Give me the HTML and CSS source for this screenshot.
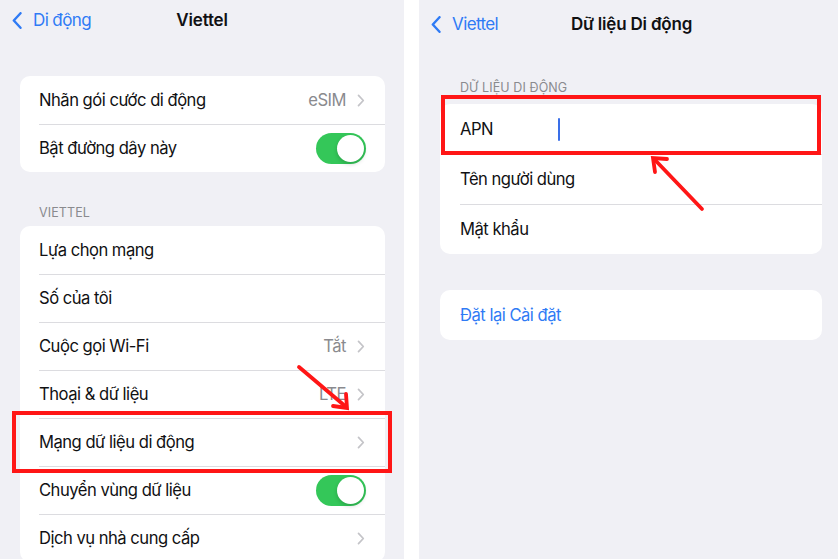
FILE: index.html
```html
<!DOCTYPE html>
<html lang="vi">
<head>
<meta charset="utf-8">
<link rel="stylesheet" href="styles.css">
</head>
<body>
<div class="page">
  <section class="panel panel-left">
    <header class="nav nav-left">
      <a class="back">
        <svg class="back-ico" viewBox="0 0 10 17" width="10" height="17"><path d="M8.5 1.2 L1.8 8.5 L8.5 15.8" fill="none" stroke="#2f7bf5" stroke-width="2.4" stroke-linecap="round" stroke-linejoin="round"/></svg>
        <span>Di động</span>
      </a>
      <h1 class="title">Viettel</h1>
    </header>
    <div class="group group-first">
      <div class="row"><span class="label">Nhãn gói cước di động</span><span class="value">eSIM</span><span class="chev"></span></div>
      <div class="row"><span class="label">Bật đường dây này</span><span class="toggle"><span class="knob"></span></span></div>
    </div>
    <div class="section-head">VIETTEL</div>
    <div class="group">
      <div class="row"><span class="label">Lựa chọn mạng</span></div>
      <div class="row"><span class="label">Số của tôi</span></div>
      <div class="row"><span class="label">Cuộc gọi Wi-Fi</span><span class="value">Tắt</span><span class="chev"></span></div>
      <div class="row"><span class="label">Thoại &amp; dữ liệu</span><span class="value">LTE</span><span class="chev"></span></div>
      <div class="row"><span class="label">Mạng dữ liệu di động</span><span class="chev"></span></div>
      <div class="row"><span class="label">Chuyển vùng dữ liệu</span><span class="toggle"><span class="knob"></span></span></div>
      <div class="row"><span class="label">Dịch vụ nhà cung cấp</span><span class="chev"></span></div>
    </div>
  </section>
  <div class="divider"></div>
  <section class="panel panel-right">
    <header class="nav nav-right">
      <a class="back">
        <svg class="back-ico" viewBox="0 0 10 17" width="10" height="17"><path d="M8.5 1.2 L1.8 8.5 L8.5 15.8" fill="none" stroke="#2f7bf5" stroke-width="2.4" stroke-linecap="round" stroke-linejoin="round"/></svg>
        <span>Viettel</span>
      </a>
      <h1 class="title">Dữ liệu Di động</h1>
    </header>
    <div class="section-head section-head-right">DỮ LIỆU DI ĐỘNG</div>
    <div class="group group-right">
      <div class="row row-tall"><span class="field-label">APN</span><span class="cursor"></span></div>
      <div class="row row-tall"><span class="label">Tên người dùng</span></div>
      <div class="row row-tall"><span class="label">Mật khẩu</span></div>
    </div>
    <div class="group group-right group-reset">
      <div class="row row-tall"><span class="link">Đặt lại Cài đặt</span></div>
    </div>
  </section>
</div>
<svg class="overlay" viewBox="0 0 838 559" width="838" height="559">
  <rect x="14" y="413" width="376" height="58" fill="none" stroke="#ff1616" stroke-width="4"/>
  <rect x="443" y="97" width="376" height="56" fill="none" stroke="#ff1616" stroke-width="4"/>
  <g stroke="#ff1616" stroke-width="3.8" stroke-linecap="round" fill="none">
    <line x1="299" y1="367" x2="345" y2="406"/>
    <polyline points="333,406 347,408 346,394" stroke-linejoin="miter"/>
    <line x1="702" y1="209" x2="656" y2="161"/>
    <polyline points="655,172 653,158 667,159" stroke-linejoin="miter"/>
  </g>
</svg>
</body>
</html>
```

FILE: styles.css
```css
* { box-sizing: border-box; }
html, body { margin: 0; padding: 0; }
body {
  width: 838px;
  height: 559px;
  overflow: hidden;
  background: #ffffff;
  font-family: Inter, "Liberation Sans", Arial, sans-serif;
  color: #111113;
  position: relative;
}
.page {
  display: flex;
  width: 838px;
  height: 559px;
}
.panel {
  background: #f0f0f5;
  height: 559px;
  overflow: hidden;
}
.panel-left { width: 404px; padding: 0 19px 0 20px; }
.divider { width: 15px; background: #ffffff; }
.panel-right { width: 419px; padding: 0 16px 0 21px; }

.nav {
  position: relative;
  display: flex;
  align-items: center;
}
.nav-left { height: 40px; margin: 0 -19px 0 -20px; padding-left: 12px; }
.nav-right { height: 48px; margin: 0 -16px 0 -21px; padding-left: 12px; }
.back {
  display: flex;
  align-items: center;
  gap: 11px;
  color: #2f7bf5;
  font-size: 17px;
  letter-spacing: -0.6px;
}
.back-ico { display: block; }
.title {
  position: absolute;
  left: 0; right: 0;
  top: 0; bottom: 0;
  margin: 0;
  display: flex;
  align-items: center;
  justify-content: center;
  font-size: 17px;
  font-weight: 600;
  letter-spacing: -0.2px;
  pointer-events: none;
}
.nav-right .title { padding-left: 6px; }

.group {
  background: #ffffff;
  border-radius: 10px;
  overflow: hidden;
}
.group-first { margin-top: 36px; }
.row {
  height: 48px;
  display: flex;
  align-items: center;
  padding: 0 20px 0 19px;
  position: relative;
  font-size: 16.6px;
  letter-spacing: -0.5px;
}
.row + .row::before {
  content: "";
  position: absolute;
  left: 19px; right: 0; top: 0;
  height: 1px;
  background: #dcdce0;
}
.row-tall { height: 50px; padding-left: 20px; }
.row-tall + .row-tall::before { left: 20px; }
.label { flex: 1; }
.value { color: #8a8a8e; margin-right: 11px; }
.chev {
  width: 8px; height: 13px;
  background: no-repeat center/8px 13px url("data:image/svg+xml;utf8,<svg xmlns='http://www.w3.org/2000/svg' viewBox='0 0 8 13'><path d='M1.5 1.3 L6.3 6.5 L1.5 11.7' fill='none' stroke='%23c4c4c8' stroke-width='1.7' stroke-linecap='round' stroke-linejoin='round'/></svg>");
}
.toggle {
  width: 50px; height: 31px;
  border-radius: 16px;
  background: #34c759;
  position: relative;
  margin-right: -1px;
}
.knob {
  position: absolute;
  right: 2px; top: 2px;
  width: 27px; height: 27px;
  border-radius: 50%;
  background: #ffffff;
  box-shadow: 0 2px 4px rgba(0,0,0,0.18);
}
.section-head {
  padding: 33px 0 6px 19px;
  font-size: 12.5px;
  line-height: 15px;
  color: #8a8a8e;
  letter-spacing: 0.1px;
}
.section-head-right { padding: 32px 0 9px 20px; }
.field-label { width: 98px; }
.cursor {
  width: 2px; height: 23px;
  background: #3a6fe8;
  border-radius: 1px;
}
.group-reset { margin-top: 36px; }
.link { color: #2f7bf5; }

.overlay {
  position: absolute;
  left: 0; top: 0;
  pointer-events: none;
}
```
